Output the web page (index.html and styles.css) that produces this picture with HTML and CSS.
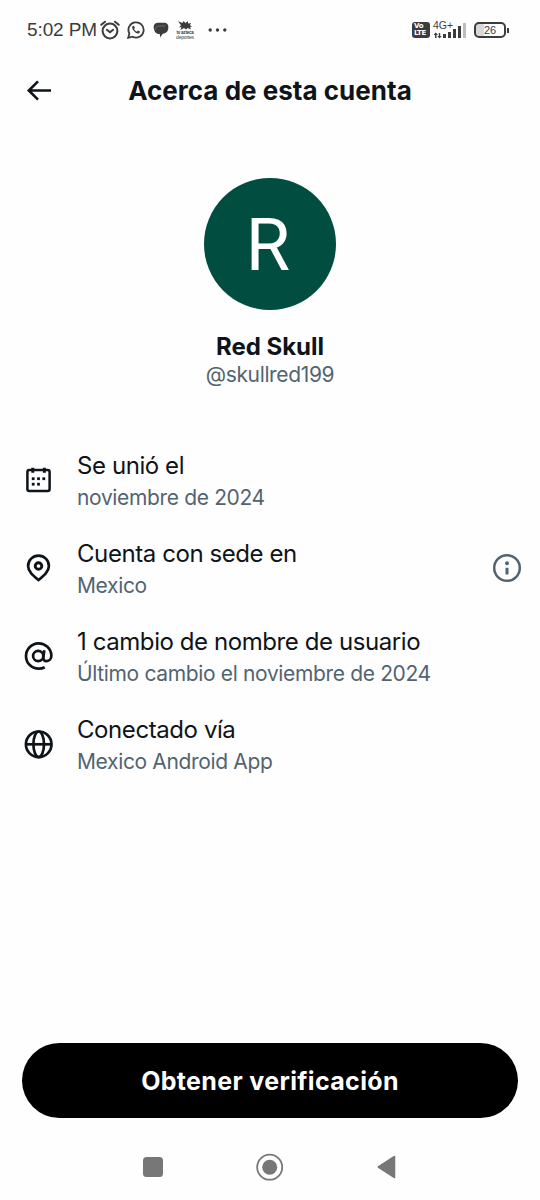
FILE: index.html
```html
<!DOCTYPE html>
<html lang="es">
<head>
<meta charset="utf-8">
<title>Acerca de esta cuenta</title>
<link rel="stylesheet" href="styles.css">
</head>
<body>
<div class="screen">
  <div class="status">
    <span class="clock">5:02 PM</span>
    <svg class="alarm" width="20" height="20" viewBox="0 0 20 20" fill="none" stroke="#3c3c3c" stroke-width="2" stroke-linecap="round"><circle cx="10" cy="11" r="7.4"/><path d="M1.3 4.8 5 1.7M18.7 4.8 15 1.7M6.9 9.8l3.1 2.5 3.1-2.5"/></svg>
    <svg class="whatsapp" width="18" height="18" viewBox="0 0 18 18" fill="none" stroke="#3c3c3c" stroke-width="1.8"><path d="M1.2 16.8l1.2-4.2A7.6 7.6 0 1 1 5.6 15.7z"/><path d="M6 4.7c-1.2.8-1.2 2.4.3 4.5 1.8 2.4 4.1 4 5.7 3.1.9-.5 1-1.2.9-1.7l-2-1-1.1 1.1C8.600 10.200 7.600 9.200 7 8l.9-1.100-.8-2z" fill="#3c3c3c" stroke="none"/></svg>
    <svg class="bubble" width="16" height="16" viewBox="0 0 16 16" fill="#3c3c3c"><path d="M4.500.8h7C14 .8 15.500 2.800 15.300 5c.3 4-1.900 6.300-5.500 6.700L7 15.500v-3.300C3.400 12.200 1.400 10 1.200 7.600-.1 5.500.8 1 4.500.8z"/><path d="M2.300 7.500c.4-2.500 1.700-3.500 4-3.500h6" fill="none" stroke="#8a8a8a" stroke-width=".6"/></svg>
    <div class="sports">
      <svg width="14" height="9" viewBox="0 0 14 9" fill="#3c3c3c"><path d="M0 .3l4.500 1.700L5.500 0l2 2L10 0v2.500l3-.5-1 2L14 6l-2-.3L13 8.500 9.500 7 8 8.500 6 7 2.500 9l1-3L1 6.500l2-2.300z"/></svg>
      <b>tv azteca</b><span>deportes</span>
    </div>
    <svg class="more" width="19" height="4" viewBox="0 0 19 4" fill="#3c3c3c"><circle cx="2.200" cy="2" r="1.700"/><circle cx="9.500" cy="2" r="1.700"/><circle cx="16.800" cy="2" r="1.700"/></svg>
    <div class="volte"><span>Vo</span><span>LTE</span></div>
    <div class="signal">
      <span class="network">4G+</span>
      <svg width="34" height="16" viewBox="0 0 34 16" fill="#3c3c3c"><path d="M2.700 9.500 5 12H3.500v3H2v-3H.500zM6.500 15.500 4.300 13h1.500v-3h1.400v3h1.500z"/><rect x="10" y="11" width="3" height="4"/><rect x="15" y="9" width="3" height="6"/><rect x="20" y="6" width="3" height="9"/><rect x="25" y="3" width="3" height="12"/><rect x="30" y="0" width="3" height="15" fill="#bdbdbd"/></svg>
    </div>
    <div class="battery"><span>26</span></div><i class="battery-tip"></i>
  </div>

  <header class="header">
    <svg class="back" width="26" height="22" viewBox="0 0 26 22" fill="none" stroke="#0f1419" stroke-width="2.600"><path d="M12 1.300 2.800 10.500l9.200 9.200M2.800 10.500H25"/></svg>
    <h1>Acerca de esta cuenta</h1>
  </header>

  <section class="profile">
    <div class="avatar"><span>R</span></div>
    <h2>Red Skull</h2>
    <p>@skullred199</p>
  </section>

  <main class="details">
    <div class="row">
      <svg class="icon" width="30" height="30" viewBox="0 0 30 30" fill="none" stroke="#0f1419" stroke-width="2.500"><rect x="3.400" y="5" width="22.200" height="21" rx="2"/><path d="M8.800 2.700v5M20.400 2.700v5" stroke-width="3"/><g fill="#0f1419" stroke="none"><rect x="7.800" y="12.300" width="2.800" height="2.800"/><rect x="13.100" y="12.300" width="2.800" height="2.800"/><rect x="18.400" y="12.300" width="2.800" height="2.800"/><rect x="7.800" y="17.800" width="2.800" height="2.800"/><rect x="13.100" y="17.800" width="2.800" height="2.800"/></g></svg>
      <div class="copy"><div class="title">Se unió el</div><div class="sub">noviembre de 2024</div></div>
    </div>
    <div class="row">
      <svg class="icon" width="30" height="30" viewBox="0 0 30 30" fill="none" stroke="#0f1419" stroke-width="2.700"><path d="M14.500 27C9 22.500 4.100 18.500 4.100 13a10.400 10.400 0 0 1 20.800 0C24.900 18.500 20 22.500 14.500 27z"/><circle cx="14.500" cy="13" r="3.300" stroke-width="2.900"/></svg>
      <div class="copy"><div class="title">Cuenta con sede en</div><div class="sub">Mexico</div></div>
      <svg class="info" width="30" height="30" viewBox="0 0 30 30" fill="none" stroke="#536471" stroke-width="2.500"><circle cx="15" cy="15" r="12.800"/><path d="M15 14.800v6.700" stroke-width="3"/><circle cx="15" cy="10.200" r="2" fill="#536471" stroke="none"/></svg>
    </div>
    <div class="row">
      <svg class="icon" width="30" height="30" viewBox="0 0 30 30" fill="none" stroke="#0f1419" stroke-width="2.700"><circle cx="14.200" cy="15" r="5.100"/><path d="M20.300 9.200l-.9 6.600c-.4 3 1 4.300 3.100 4.300 3 0 4.900-2.400 4.900-5.600A12.700 12.700 0 1 0 14.700 27.700c2.300 0 4.200-.5 6-1.500"/></svg>
      <div class="copy"><div class="title">1 cambio de nombre de usuario</div><div class="sub">Último cambio el noviembre de 2024</div></div>
    </div>
    <div class="row">
      <svg class="icon" width="30" height="30" viewBox="0 0 30 30" fill="none" stroke="#0f1419" stroke-width="2.700"><circle cx="14.700" cy="15.300" r="12.800"/><ellipse cx="14.700" cy="15.300" rx="5.300" ry="12.800"/><path d="M2 15.300h25.500"/></svg>
      <div class="copy"><div class="title">Conectado vía</div><div class="sub">Mexico Android App</div></div>
    </div>
  </main>

  <button class="verify"><span>Obtener verificación</span></button>

  <nav class="system-nav">
    <svg width="20" height="20" viewBox="0 0 20 20"><rect width="20" height="20" rx="3.500" fill="#777"/></svg>
    <svg width="28" height="28" viewBox="0 0 28 28"><circle cx="13.700" cy="14.200" r="12.500" fill="none" stroke="#777" stroke-width="1.800"/><circle cx="13.700" cy="14.200" r="7.500" fill="#777"/></svg>
    <svg width="19" height="24" viewBox="0 0 19 24"><path d="M1.300 12 17.500 1.500v21z" fill="#777" stroke="#777" stroke-width="1.500" stroke-linejoin="round"/></svg>
  </nav>
</div>
</body>
</html>
```
FILE: styles.css
```css
* { box-sizing: border-box; }
body { margin: 0; background: #fefefe; color: #0f1419; font-family: Inter, "Noto Sans", sans-serif; }
h1, h2, p { margin: 0; }
svg { display: block; flex: none; }
.screen { width: 540px; height: 1200px; display: flex; flex-direction: column; overflow: hidden; }

.status { height: 60px; padding-left: 27px; display: flex; align-items: center; color: #3c3c3c; font-family: "Liberation Sans", Arial, sans-serif; flex: none; white-space: nowrap; }
.clock { width: 73px; font-size: 19px; letter-spacing: -.1px; }
.whatsapp { margin-left: 7px; }
.bubble { margin-left: 8px; }
.sports { width: 20px; margin-left: 6px; margin-right: 1px; display: flex; flex-direction: column; align-items: center; font-size: 5px; line-height: 5px; letter-spacing: -.2px; }
.sports b { font-size: 4.5px; }
.more { margin-left: 12px; }
.volte { width: 18px; height: 16px; margin-left: 185px; padding: 1px 0 0 2px; border-radius: 3px; background: #3c3c3c; color: #fff; font: bold 7px/7px "DejaVu Sans", sans-serif; display: flex; flex-direction: column; letter-spacing: -.3px; }
.signal { width: 35px; height: 20px; margin-left: 3px; display: grid; }
.signal > * { grid-area: 1 / 1; }
.signal svg { align-self: end; margin-bottom: 1px; }
.network { font-size: 10.5px; line-height: 10px; }
.battery { width: 32px; height: 16px; margin-left: 6px; border: 2px solid #3c3c3c; border-radius: 5px; background: linear-gradient(90deg, #d9d9d9 28%, transparent 28%); font-size: 11px; line-height: 12px; text-align: center; }
.battery-tip { width: 2px; height: 5px; margin-left: 1px; background: #3c3c3c; }

.header { height: 60px; flex: none; display: grid; grid-template-columns: 26px 1fr 26px; align-items: center; padding: 1px 26px 0; }
h1 { font-size: 26px; line-height: 32px; font-weight: 700; text-align: center; white-space: nowrap; letter-spacing: .02px; }

.profile { height: 316px; flex: none; padding-top: 58px; display: flex; flex-direction: column; align-items: center; }
.avatar { width: 132px; height: 132px; padding: 3px 4px 0 0; border-radius: 50%; background: #014d40; color: #fff; display: flex; align-items: center; justify-content: center; font: 72px/72px Roboto, sans-serif; }
h2 { margin-top: 22px; font-size: 24px; line-height: 30px; font-weight: 700; }
.profile p { font-size: 21px; line-height: 26px; letter-spacing: -.35px; color: #536471; }

.details { flex: 1; padding: 0 18px 0 24px; }
.row { height: 88px; display: flex; align-items: center; }
.copy { margin-left: 23px; padding-top: 2px; flex: 1; white-space: nowrap; }
.title { font-size: 24px; line-height: 34px; letter-spacing: -.42px; }
.sub { font-size: 21px; line-height: 30px; letter-spacing: -.35px; color: #536471; }

.verify { height: 75px; flex: none; margin: 0 22px; border: 0; border-radius: 38px; background: #000; color: #fff; font: 700 25px/30px Inter, sans-serif; letter-spacing: .35px; }
.system-nav { height: 82px; flex: none; padding: 16px 144px 0 143px; display: flex; justify-content: space-between; align-items: center; }
```
